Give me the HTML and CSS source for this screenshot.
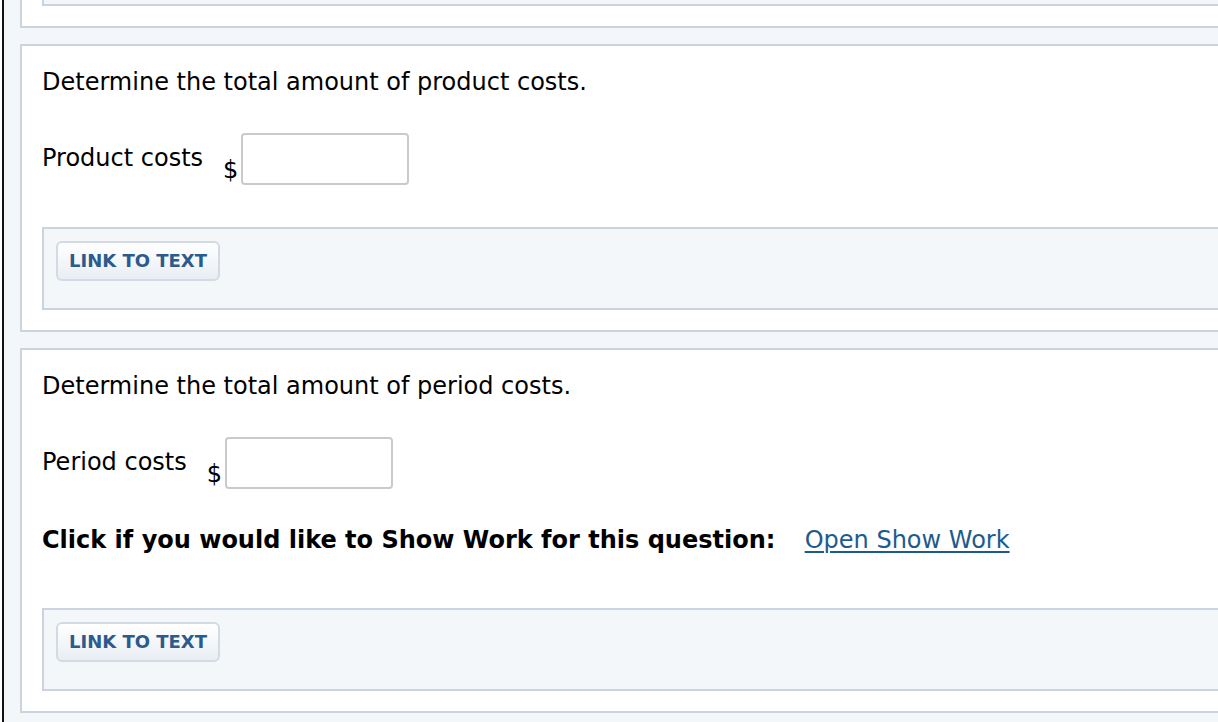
FILE: index.html
```html
<!DOCTYPE html>
<html lang="en">
<head>
<meta charset="utf-8">
<title>Product and period costs</title>
<link rel="stylesheet" href="styles.css">
</head>
<body>
<div class="page">
  <section class="card card-top">
    <div class="resources resources-cut"></div>
  </section>

  <section class="card">
    <p class="question">Determine the total amount of product costs.</p>
    <div class="answer-row">
      <span class="label">Product costs</span>
      <span class="currency">$</span>
      <input class="field" type="text" aria-label="Product costs">
    </div>
    <div class="resources">
      <button class="btn-link" type="button">LINK TO TEXT</button>
    </div>
  </section>

  <section class="card">
    <p class="question">Determine the total amount of period costs.</p>
    <div class="answer-row">
      <span class="label">Period costs</span>
      <span class="currency">$</span>
      <input class="field" type="text" aria-label="Period costs">
    </div>
    <p class="showwork">Click if you would like to Show Work for this question: <a class="showwork-link" href="#">Open Show Work</a></p>
    <div class="resources resources-after-work">
      <button class="btn-link" type="button">LINK TO TEXT</button>
    </div>
  </section>
</div>
</body>
</html>
```

FILE: styles.css
```css
html, body {
  margin: 0;
  padding: 0;
  background: #ffffff;
  overflow: hidden;
  height: 100%;
}

body {
  font-family: "DejaVu Sans", Verdana, sans-serif;
  font-size: 24px;
  line-height: 28px;
  color: #000;
}

.page {
  margin-left: 2px;
  border-left: 2px solid #111;
  background: #f4f7fa;
  padding: 0 0 0 16px;
  width: 1400px;
  min-height: 722px;
  display: flex;
  flex-direction: column;
  gap: 16px;
}

.card {
  background: #fff;
  border: 2px solid #cbd3de;
  padding: 22px 0 20px 20px;
}

.card-top {
  margin-top: -59px;
  padding-top: 0;
}

.resources-cut {
  height: 20px;
  margin-top: 0 !important;
}

.question {
  margin: 0;
}

.answer-row {
  display: flex;
  align-items: flex-start;
  margin-top: 37px;
}

.label {
  padding-top: 11px;
  margin-right: 20px;
}

.currency {
  align-self: flex-end;
  margin-bottom: 1px;
  margin-right: 3px;
}

.field {
  width: 168px;
  height: 52px;
  box-sizing: border-box;
  border: 2px solid #cacaca;
  border-radius: 4px;
  background: #fff;
  margin: 0;
  padding: 0 6px;
  font: inherit;
}

.showwork {
  margin: 37px 0 0;
  font-weight: bold;
}

.showwork-link {
  font-weight: normal;
  color: #1d5b8e;
  text-decoration: underline;
  text-decoration-thickness: 2px;
  text-underline-offset: 3px;
  margin-left: 21px;
}

.resources {
  margin-top: 42px;
  background: #f4f7fa;
  border: 2px solid #cbd3de;
  padding: 12px 12px 27px;
}

.resources-after-work {
  margin-top: 54px;
}

.btn-link {
  display: block;
  height: 40px;
  box-sizing: border-box;
  padding: 0 11px;
  border: 2px solid #d3dae3;
  border-radius: 6px;
  background: linear-gradient(#ffffff, #e9eef4);
  color: #2c5a8c;
  font-family: "DejaVu Sans", Verdana, sans-serif;
  font-weight: bold;
  font-size: 18px;
  line-height: 36px;
  cursor: pointer;
}
```
